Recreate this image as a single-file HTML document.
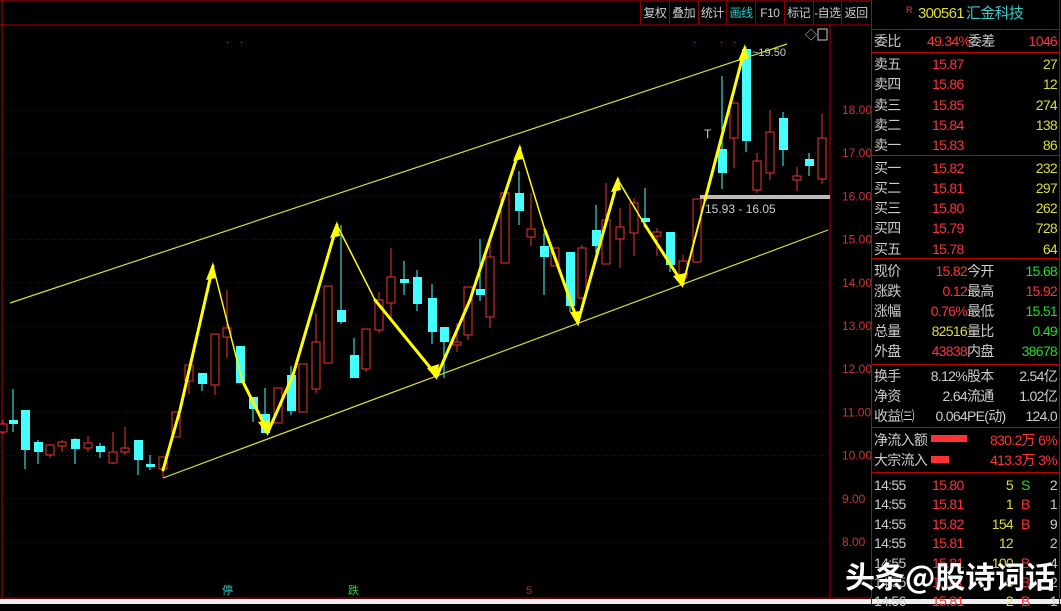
<!DOCTYPE html>
<html><head><meta charset="utf-8"><style>
body{margin:0;width:1061px;height:604px;background:#000;overflow:hidden;position:relative;font-family:"Liberation Sans","Noto Sans CJK SC",sans-serif}
#tb{position:absolute;left:640px;top:2px;width:230px;height:22px;display:flex}
#tb div{flex:1;text-align:center;color:#ccc;font-size:12px;border-left:1px solid #800;line-height:22px;letter-spacing:-0.5px}
#pn{position:absolute;left:871px;top:0;width:187px;height:604px;border-left:1px solid #b00;border-right:1px solid #b00;font-size:14px}
.r{position:absolute;left:2px;right:2px;height:20px;line-height:20px;white-space:nowrap}
.r span{position:absolute;letter-spacing:-0.7px}
.hl{position:absolute;left:0;right:0;border-top:1px solid #b00}
.w{color:#ccc}.rd{color:#f33}.y{color:#dd3}.g{color:#2d2}
</style></head><body>
<svg width="1061" height="604" style="position:absolute;left:0;top:0" id="s">
<line x1="0" y1="1" x2="871" y2="1" stroke="#b00"/>
<line x1="0" y1="25" x2="871" y2="25" stroke="#b00"/>
<line x1="2" y1="0" x2="2" y2="598" stroke="#b00"/>
<line x1="830" y1="25" x2="830" y2="598" stroke="#b00"/>
<line x1="0" y1="598" x2="871" y2="598" stroke="#b00"/>
<rect x="0" y="599" width="1061" height="5" fill="#eee"/>
<g id="grid"></g>
<rect x="700" y="195" width="130" height="4" fill="#bbb"/>
<text x="705" y="213" fill="#ccc" font-size="12" font-family="Liberation Sans">15.93 - 16.05</text>
<text x="752" y="56" fill="#ccc" font-size="11" font-family="Liberation Sans">~19.50</text>
<text x="704" y="138" fill="#ccc" font-size="12">T</text>
<g id="c"></g>
<g stroke="#dd3" stroke-width="1.2"><line x1="10" y1="303" x2="787" y2="44"/><line x1="163" y1="478" x2="828" y2="230"/></g>
<g fill="none" stroke="#ff0" stroke-linecap="round">
<polyline stroke-width="3" points="163,470 180,410 213,266"/>
<polyline stroke-width="1.5" points="213,266 242,380"/>
<polyline stroke-width="3" points="242,380 268,432"/>
<polyline stroke-width="3" points="268,432 293,375 337,225"/>
<polyline stroke-width="1.5" points="337,225 375,300"/>
<polyline stroke-width="3" points="375,300 437,376"/>
<polyline stroke-width="3" points="437,376 470,300 520,148"/>
<polyline stroke-width="1.5" points="520,148 545,230"/>
<polyline stroke-width="3" points="545,230 578,322 618,180"/>
<polyline stroke-width="1.5" points="618,180 645,225"/>
<polyline stroke-width="3" points="645,225 683,284"/>
<polyline stroke-width="2" points="683,284 705,200"/>
<polyline stroke-width="3" points="705,200 745,48"/>
</g>
<g fill="#ff0"><polygon points="213,262 206,280 216,278"/><polygon points="337,221 330,238 340,236"/><polygon points="520,144 513,161 523,159"/><polygon points="618,176 611,192 621,190"/><polygon points="745,44 738,61 748,59"/><polygon points="268,436 258,422 270,420"/><polygon points="437,380 427,368 439,364"/><polygon points="578,326 570,312 582,311"/><polygon points="683,288 673,276 685,273"/></g>
<g fill="#c4c" font-size="10"><text x="226" y="45">·</text><text x="240" y="45">·</text><text x="693" y="45">·</text><text x="720" y="45">·</text><text x="733" y="45">·</text></g>
<text x="805" y="39" fill="#ccc" font-size="12">◇</text><rect x="818" y="29" width="9" height="11" fill="none" stroke="#ccc"/>
<g fill="#c33" font-size="12" font-family="Liberation Sans" id="ax"></g>
<text x="222" y="594" fill="#3cc" font-size="11">停</text>
<text x="348" y="594" fill="#3c3" font-size="11">跌</text>
<text x="526" y="594" fill="#c22" font-size="11">5</text>
</svg>
<div id="tb"><div>复权</div><div>叠加</div><div>统计</div><div style="color:#3cc">画线</div><div>F10</div><div>标记</div><div>-自选</div><div>返回</div></div>
<div id="pn">
<div class="r" style="top:4px;font-size:15px"><span style="left:32px;top:-4px;font-size:9px" class="rd">R</span><span style="left:44px" class="y">300561</span><span style="left:92px;color:#3cc">汇金科技</span></div>
<div class="hl" style="top:29px"></div>
<div class="r" style="top:31px"><span class="w">委比</span><span class="rd" style="left:53px">49.34%</span><span class="w" style="left:94px">委差</span><span class="rd" style="right:0">1046</span></div>
<div class="hl" style="top:52px"></div>
<div id="ob"></div>
<div class="hl" style="top:155px"></div>
<div class="hl" style="top:258px"></div>
<div id="st"></div>
<div class="hl" style="top:364px"></div>
<div class="hl" style="top:427px"></div>
<div class="r" style="top:430px"><span class="w">净流入额</span><span style="left:57px;top:5px;width:36px;height:7px;background:#f33"></span><span class="rd" style="left:116px">830.2万</span><span class="rd" style="right:0">6%</span></div>
<div class="r" style="top:450px"><span class="w">大宗流入</span><span style="left:57px;top:6px;width:18px;height:7px;background:#f33"></span><span class="rd" style="left:116px">413.3万</span><span class="rd" style="right:0">3%</span></div>
<div class="hl" style="top:472px"></div>
<div id="tr"></div>
</div>
<div style="position:absolute;left:845px;top:553px;color:#fff;font-size:30px;font-weight:bold;font-family:'Noto Sans CJK SC',sans-serif;text-shadow:0 0 2px #000">头条@股诗词话</div>
<script>
var s='',g='',a='';
for(var p=18;p>=8;p--){var y=110+(18-p)*43.2;g+='<line x1="3" y1="'+y+'" x2="830" y2="'+y+'" stroke="#700" stroke-dasharray="1,3"/>';a+='<text x="842" y="'+(y+4)+'">'+p.toFixed(2)+'</text>';}
document.getElementById('grid').innerHTML=g;document.getElementById('ax').innerHTML=a;
var C=[[3,424,432,420,434,'r'],[13,420,424,389,432,'c'],[25,410,450,410,469,'c'],[38,442,452,440,464,'c'],[50,445,455,444,458,'r'],[62,442,446,440,452,'r'],[75,439,449,438,464,'c'],[88,443,448,436,452,'r'],[100,446,452,443,458,'c'],[113,452,463,432,464,'r'],[125,448,452,427,455,'r'],[138,440,460,440,475,'c'],[150,464,467,455,470,'c'],[163,457,469,457,478,'r'],[176,412,437,412,437,'r'],[189,365,381,365,394,'r'],[202,373,384,373,391,'c'],[215,334,385,334,395,'r'],[227,328,337,290,358,'r'],[240,346,383,346,383,'c'],[253,397,409,397,422,'c'],[265,414,433,388,433,'c'],[278,388,423,388,423,'r'],[291,375,411,366,415,'c'],[303,364,412,364,412,'r'],[316,342,389,313,393,'r'],[328,286,363,286,363,'r'],[341,310,322,225,324,'c'],[354,355,378,338,378,'c'],[366,329,369,329,372,'r'],[379,300,330,292,333,'r'],[391,277,303,248,318,'r'],[404,279,283,261,295,'c'],[417,277,304,270,311,'c'],[432,298,332,284,344,'c'],[444,327,342,327,378,'c'],[457,342,345,323,352,'r'],[468,287,335,287,340,'r'],[480,289,295,239,301,'c'],[490,257,317,240,328,'r'],[505,193,263,193,263,'r'],[519,193,211,171,225,'c'],[531,229,237,193,246,'r'],[544,246,257,233,295,'c'],[555,248,266,248,266,'r'],[570,252,306,252,312,'c'],[582,248,298,245,300,'r'],[596,230,246,205,253,'c'],[606,220,264,183,264,'r'],[620,227,239,208,268,'r'],[634,203,233,198,256,'r'],[645,218,222,188,228,'c'],[657,232,236,228,256,'r'],[670,232,265,232,272,'c'],[683,261,278,255,278,'r'],[697,199,262,199,262,'r'],[722,149,173,76,189,'c'],[734,103,138,103,168,'r'],[746,49,141,49,152,'c'],[757,161,190,153,193,'r'],[770,132,173,110,180,'r'],[783,118,150,112,166,'c'],[797,176,180,167,191,'r'],[809,159,166,153,176,'c'],[822,138,179,114,184,'r']];
C.forEach(function(k){var col=k[5]=='c'?'#4ff':'#e33';var h=Math.max(k[2]-k[1],2);s+='<line x1="'+k[0]+'" y1="'+k[3]+'" x2="'+k[0]+'" y2="'+k[4]+'" stroke="'+col+'"/>';s+=k[5]=='c'?'<rect x="'+(k[0]-4)+'" y="'+k[1]+'" width="9" height="'+h+'" fill="#4ff"/>':'<rect x="'+(k[0]-4)+'" y="'+k[1]+'" width="8" height="'+h+'" fill="#000" stroke="#e33"/>';});
document.getElementById('c').innerHTML=s;
var ob='',n=['卖五','卖四','卖三','卖二','卖一','买一','买二','买三','买四','买五'],pr=['15.87','15.86','15.85','15.84','15.83','15.82','15.81','15.80','15.79','15.78'],v=['27','12','274','138','86','232','297','262','728','64'];
for(var i=0;i<10;i++){var t=54+i*20.3+(i>4?2:0);ob+='<div class="r" style="top:'+t+'px"><span class="w">'+n[i]+'</span><span class="rd" style="left:58px">'+pr[i]+'</span><span class="y" style="right:0">'+v[i]+'</span></div>';}
document.getElementById('ob').innerHTML=ob;
var st=[['现价','15.82','rd','今开','15.68','g'],['涨跌','0.12','rd','最高','15.92','rd'],['涨幅','0.76%','rd','最低','15.51','g'],['总量','82516','y','量比','0.49','g'],['外盘','43838','rd','内盘','38678','g'],['换手','8.12%','w','股本','2.54亿','w'],['净资','2.64','w','流通','1.02亿','w'],['收益㈢','0.064','w','PE(动)','124.0','w']],h='';
st.forEach(function(r,i){var t=261+i*20+(i>4?5:0);h+='<div class="r" style="top:'+t+'px"><span class="w">'+r[0]+'</span><span class="'+r[2]+'" style="right:90px">'+r[1]+'</span><span class="w" style="left:93px">'+r[3]+'</span><span class="'+r[5]+'" style="right:0">'+r[4]+'</span></div>';});
document.getElementById('st').innerHTML=h;
var tr=[['14:55','15.80','5','S','g','2'],['14:55','15.81','1','B','rd','1'],['14:55','15.82','154','B','rd','9'],['14:55','15.81','12','','rd','2'],['14:55','15.81','100','B','rd','4'],['14:55','15.81','5','B','rd','2'],['14:56','15.81','2','B','rd','1']],q='';
tr.forEach(function(r,i){q+='<div class="r" style="top:'+(475+i*19.4)+'px"><span class="w">'+r[0]+'</span><span class="rd" style="left:58px">'+r[1]+'</span><span class="y" style="right:44px">'+r[2]+'</span><span class="'+r[4]+'" style="left:147px">'+r[3]+'</span><span class="w" style="right:0">'+r[5]+'</span></div>';});
document.getElementById('tr').innerHTML=q;
</script>
</body></html>
